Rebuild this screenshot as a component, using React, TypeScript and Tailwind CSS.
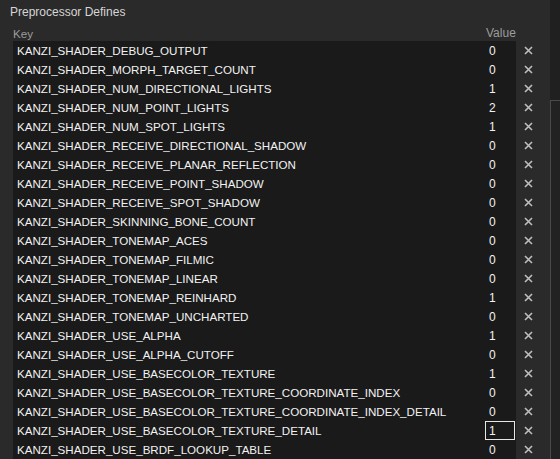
import React from 'react';

const rows: [string, string][] = [
  ['KANZI_SHADER_DEBUG_OUTPUT', '0'],
  ['KANZI_SHADER_MORPH_TARGET_COUNT', '0'],
  ['KANZI_SHADER_NUM_DIRECTIONAL_LIGHTS', '1'],
  ['KANZI_SHADER_NUM_POINT_LIGHTS', '2'],
  ['KANZI_SHADER_NUM_SPOT_LIGHTS', '1'],
  ['KANZI_SHADER_RECEIVE_DIRECTIONAL_SHADOW', '0'],
  ['KANZI_SHADER_RECEIVE_PLANAR_REFLECTION', '0'],
  ['KANZI_SHADER_RECEIVE_POINT_SHADOW', '0'],
  ['KANZI_SHADER_RECEIVE_SPOT_SHADOW', '0'],
  ['KANZI_SHADER_SKINNING_BONE_COUNT', '0'],
  ['KANZI_SHADER_TONEMAP_ACES', '0'],
  ['KANZI_SHADER_TONEMAP_FILMIC', '0'],
  ['KANZI_SHADER_TONEMAP_LINEAR', '0'],
  ['KANZI_SHADER_TONEMAP_REINHARD', '1'],
  ['KANZI_SHADER_TONEMAP_UNCHARTED', '0'],
  ['KANZI_SHADER_USE_ALPHA', '1'],
  ['KANZI_SHADER_USE_ALPHA_CUTOFF', '0'],
  ['KANZI_SHADER_USE_BASECOLOR_TEXTURE', '1'],
  ['KANZI_SHADER_USE_BASECOLOR_TEXTURE_COORDINATE_INDEX', '0'],
  ['KANZI_SHADER_USE_BASECOLOR_TEXTURE_COORDINATE_INDEX_DETAIL', '0'],
  ['KANZI_SHADER_USE_BASECOLOR_TEXTURE_DETAIL', '1'],
  ['KANZI_SHADER_USE_BRDF_LOOKUP_TABLE', '0'],
];

function RemoveIcon() {
  return (
    <svg width="9" height="9" viewBox="0 0 9 9">
      <path d="M1 1 L8 8 M8 1 L1 8" stroke="#bebebe" strokeWidth="1.6" />
    </svg>
  );
}

export default function App() {
  return (
    <div
      className="flex h-[459px] w-[560px] overflow-hidden bg-[#2a2a2a] text-[11.6px]"
      style={{ fontFamily: '"Liberation Sans", Arial, sans-serif' }}
    >
      <div className="flex w-[550px] flex-col">
        {/* Section title */}
        <div className="h-[24px] pl-[10px] pt-[4px] text-[12px] leading-[16px] text-[#d6d6d6]">
          Preprocessor Defines
        </div>

        {/* Column headers */}
        <div className="flex h-[17px] items-end pl-[13px] pr-[34px] leading-[15px] text-[#9c9c9c]">
          <div className="flex-1">Key</div>
          <div className="w-[30px] text-[12px]">Value</div>
        </div>

        {/* Rows */}
        <div className="flex flex-col">
          {rows.map(([key, value], i) => {
            const editing = i === 20;
            return (
              <div key={key} className="flex h-[19px] shrink-0 items-center">
                <div className="ml-[13px] flex h-full w-[503px] items-center bg-[#1a1a1a]">
                  <div className="flex-1 pl-[4px] text-[#f2f2f2]">{key}</div>
                  <div className="flex h-full w-[31px] items-center">
                    {editing ? (
                      <div className="flex h-[19px] w-[30px] items-center border border-[#e6e6e6] pl-[3px] text-[12px] text-[#f2f2f2]">
                        {value}
                      </div>
                    ) : (
                      <div className="pl-[4px] text-[12px] text-[#f2f2f2]">{value}</div>
                    )}
                  </div>
                </div>
                <div className="flex w-[34px] items-center pl-[8px]">
                  <RemoveIcon />
                </div>
              </div>
            );
          })}
        </div>
      </div>

      {/* Right edge strip */}
      <div className="flex w-[10px] flex-col bg-[#202020]">
        <div className="h-[100px]" />
        <div className="flex-1 border-l border-t border-[#4a4a4a] bg-[#222222]" />
      </div>
    </div>
  );
}
